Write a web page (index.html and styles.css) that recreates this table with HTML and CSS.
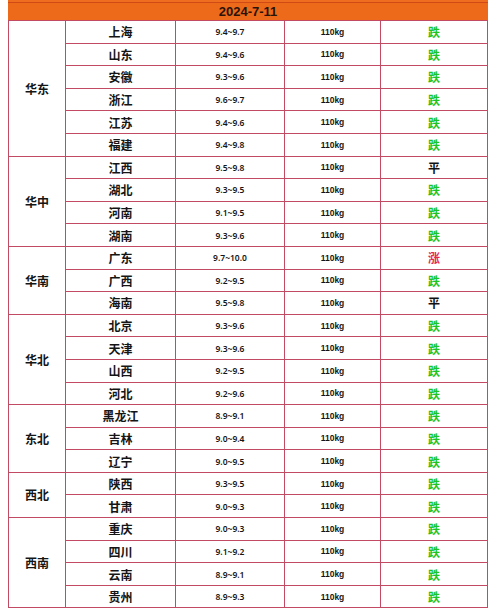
FILE: index.html
```html
<!DOCTYPE html>
<html lang="zh">
<head>
<meta charset="utf-8">
<title>2024-7-11</title>
<link rel="stylesheet" href="styles.css">
</head>
<body>
<div class="sheet">
  <div class="head">2024-7-11</div>

  <div class="region span6">华东</div>
  <div class="city">上海</div><div class="num">9.4~9.7</div><div class="kg">110kg</div><div class="tr down">跌</div>
  <div class="city">山东</div><div class="num">9.4~9.6</div><div class="kg">110kg</div><div class="tr down">跌</div>
  <div class="city">安徽</div><div class="num">9.3~9.6</div><div class="kg">110kg</div><div class="tr down">跌</div>
  <div class="city">浙江</div><div class="num">9.6~9.7</div><div class="kg">110kg</div><div class="tr down">跌</div>
  <div class="city">江苏</div><div class="num">9.4~9.6</div><div class="kg">110kg</div><div class="tr down">跌</div>
  <div class="city">福建</div><div class="num">9.4~9.8</div><div class="kg">110kg</div><div class="tr down">跌</div>

  <div class="region span4">华中</div>
  <div class="city">江西</div><div class="num">9.5~9.8</div><div class="kg">110kg</div><div class="tr flat">平</div>
  <div class="city">湖北</div><div class="num">9.3~9.5</div><div class="kg">110kg</div><div class="tr down">跌</div>
  <div class="city">河南</div><div class="num">9.1~9.5</div><div class="kg">110kg</div><div class="tr down">跌</div>
  <div class="city">湖南</div><div class="num">9.3~9.6</div><div class="kg">110kg</div><div class="tr down">跌</div>

  <div class="region span3">华南</div>
  <div class="city">广东</div><div class="num">9.7~10.0</div><div class="kg">110kg</div><div class="tr up">涨</div>
  <div class="city">广西</div><div class="num">9.2~9.5</div><div class="kg">110kg</div><div class="tr down">跌</div>
  <div class="city">海南</div><div class="num">9.5~9.8</div><div class="kg">110kg</div><div class="tr flat">平</div>

  <div class="region span4">华北</div>
  <div class="city">北京</div><div class="num">9.3~9.6</div><div class="kg">110kg</div><div class="tr down">跌</div>
  <div class="city">天津</div><div class="num">9.3~9.6</div><div class="kg">110kg</div><div class="tr down">跌</div>
  <div class="city">山西</div><div class="num">9.2~9.5</div><div class="kg">110kg</div><div class="tr down">跌</div>
  <div class="city">河北</div><div class="num">9.2~9.6</div><div class="kg">110kg</div><div class="tr down">跌</div>

  <div class="region span3">东北</div>
  <div class="city">黑龙江</div><div class="num">8.9~9.1</div><div class="kg">110kg</div><div class="tr down">跌</div>
  <div class="city">吉林</div><div class="num">9.0~9.4</div><div class="kg">110kg</div><div class="tr down">跌</div>
  <div class="city">辽宁</div><div class="num">9.0~9.5</div><div class="kg">110kg</div><div class="tr down">跌</div>

  <div class="region span2">西北</div>
  <div class="city">陕西</div><div class="num">9.3~9.5</div><div class="kg">110kg</div><div class="tr down">跌</div>
  <div class="city">甘肃</div><div class="num">9.0~9.3</div><div class="kg">110kg</div><div class="tr down">跌</div>

  <div class="region span4">西南</div>
  <div class="city">重庆</div><div class="num">9.0~9.3</div><div class="kg">110kg</div><div class="tr down">跌</div>
  <div class="city">四川</div><div class="num">9.1~9.2</div><div class="kg">110kg</div><div class="tr down">跌</div>
  <div class="city">云南</div><div class="num">8.9~9.1</div><div class="kg">110kg</div><div class="tr down">跌</div>
  <div class="city">贵州</div><div class="num">8.9~9.3</div><div class="kg">110kg</div><div class="tr down">跌</div>
</div>
</body>
</html>
```

FILE: styles.css
```css
html, body {
  margin: 0;
  padding: 0;
  background: #ffffff;
}

body {
  padding-left: 8px;
  font-family: "Noto Sans CJK SC", "Liberation Sans", sans-serif;
}

.sheet {
  width: 480px;
  display: grid;
  grid-template-columns: 58px 110px 109px 96px 107px;
  grid-template-rows: 21px repeat(26, 22.6px);
}

.sheet > div {
  box-sizing: border-box;
  display: flex;
  align-items: center;
  justify-content: center;
  border-right: 1px solid #c34a63;
  border-bottom: 1px solid #c34a63;
  color: #151515;
}

.sheet > .head {
  grid-column: 1 / -1;
  border: none;
  background: linear-gradient(#ef6d1f 0 2px, #cf4a14 2px 3px, #ee6a1b 3px 20px, #c34a63 20px 21px);
  font-family: "Liberation Sans", Arial, sans-serif;
  font-weight: 700;
  font-size: 13px;
  color: #2a140a;
  padding-top: 2px;
}

.sheet > .region {
  border-left: 1px solid #c34a63;
  font-weight: 700;
  font-size: 12px;
}

.span2 { grid-row: span 2; }
.span3 { grid-row: span 3; }
.span4 { grid-row: span 4; }
.span6 { grid-row: span 6; }

.city {
  font-weight: 700;
  font-size: 12px;
}

.num {
  font-family: "Noto Sans", "Liberation Sans", sans-serif;
  font-weight: 600;
  font-size: 8.5px;
  color: #333333;
}

.kg {
  font-family: "Liberation Sans", Arial, sans-serif;
  font-weight: 700;
  font-size: 8.5px;
  color: #222222;
}

.tr {
  font-weight: 700;
  font-size: 12px;
}

.sheet > .down { color: #1fc41f; }
.sheet > .up { color: #e4264f; }
.sheet > .flat { color: #111111; }
```
